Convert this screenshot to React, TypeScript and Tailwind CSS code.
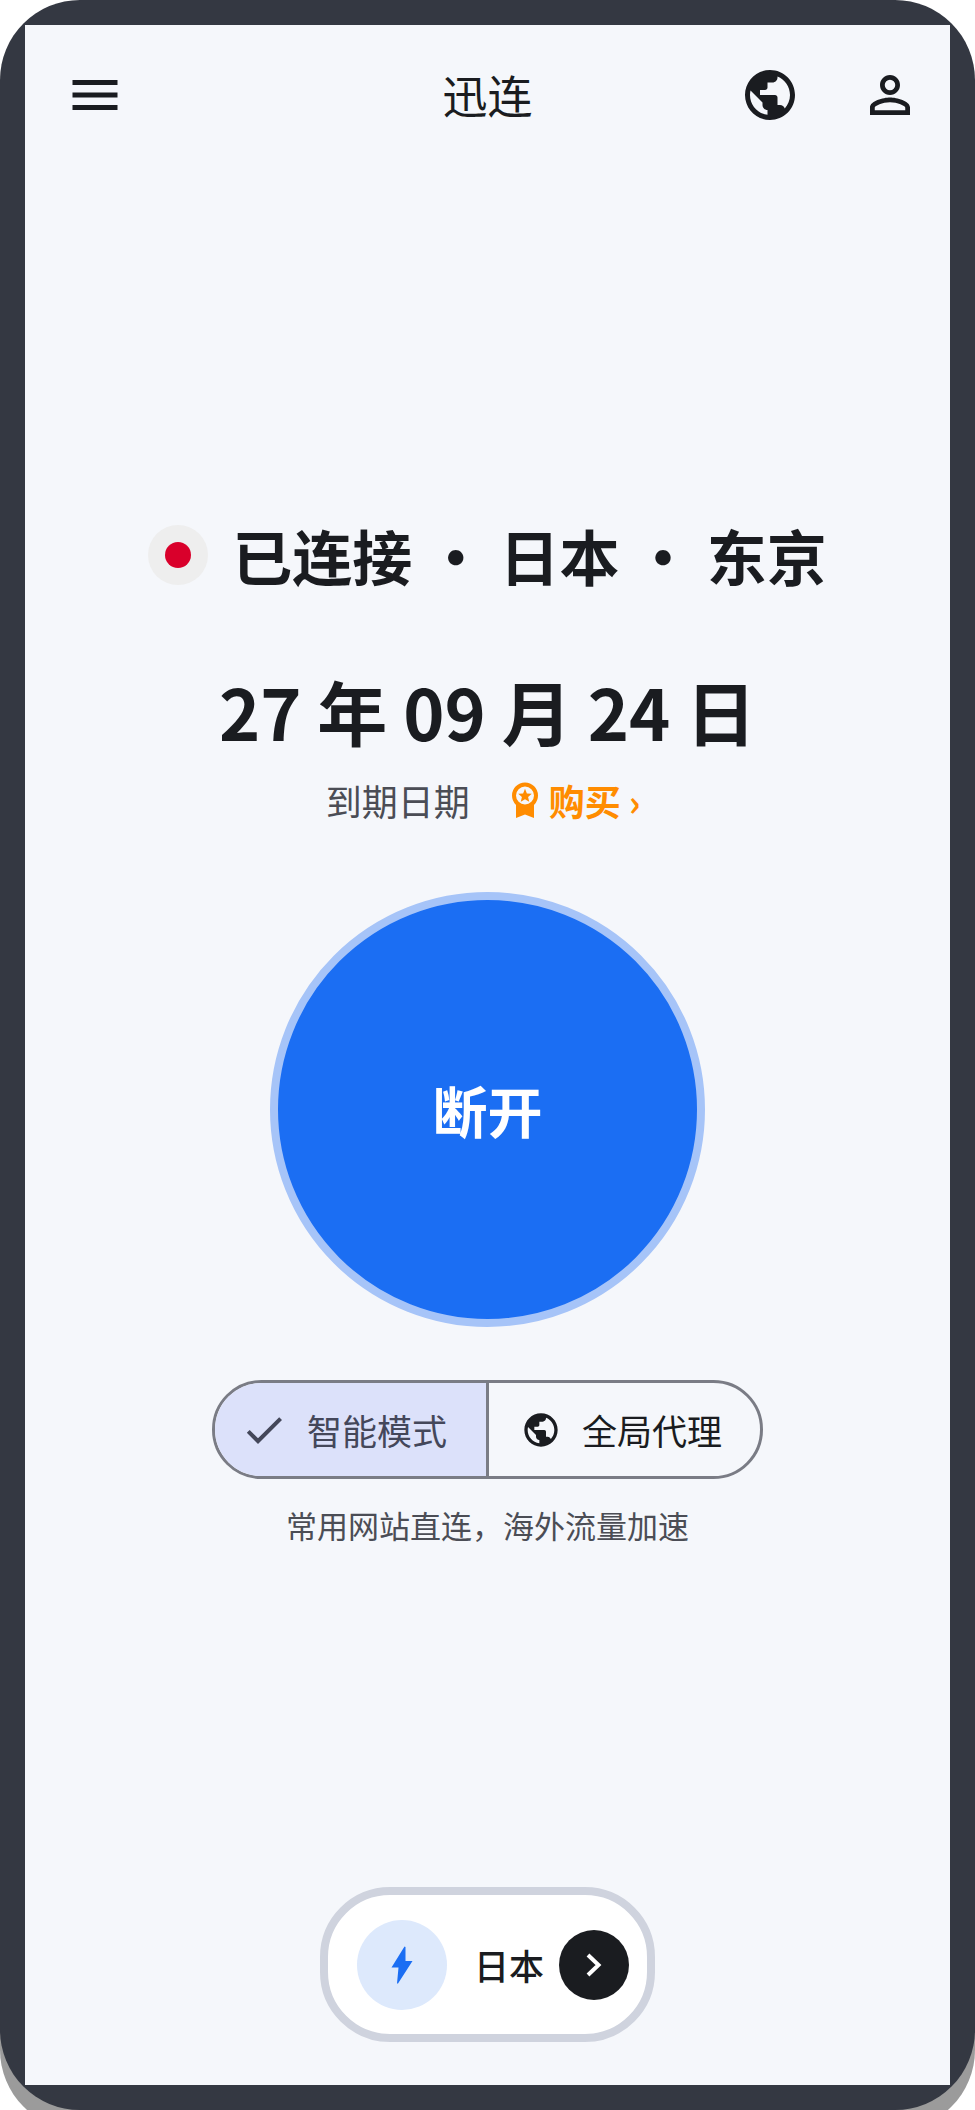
import { MdCheck, MdMenu, MdPersonOutline, MdPublic } from "react-icons/md";

function BuyBadge() {
    return (
        <svg width="28" height="36" viewBox="0 0 28 36" fill="none">
            <path d="M5 18V36L14 32.5L23 36V18Z" fill="#ff8c00" />
            <circle cx="14" cy="13.5" r="11" fill="#f5f7fb" stroke="#ff8c00" strokeWidth="4" />
            <path d="M14 6.8L15.9 11.4L20.8 11.8L17.1 15L18.2 19.8L14 17.2L9.8 19.8L10.9 15L7.2 11.8L12.1 11.4Z" fill="#ff8c00" />
        </svg>
    );
}

function Bolt() {
    return (
        <svg width="22" height="38" viewBox="0 0 22 38" fill="#1b6ef3">
            <path d="M13.5 0.5L14.5 1V15H21.5L7 37.5H6L7.5 21.5H0.5Z" />
        </svg>
    );
}

function Chevron() {
    return (
        <svg width="16" height="24" viewBox="0 0 16 24" fill="none" stroke="white" strokeWidth="4">
            <path d="M2 2L12.5 12L2 22" />
        </svg>
    );
}

export default function App() {
    return (
        <div className="w-[975px] h-[2110px] bg-white overflow-hidden font-['Noto_Sans_CJK_SC','Noto_Sans',sans-serif]">
            <div className="w-full h-full rounded-[80px] p-[25px] bg-[#343842] shadow-[0_20px_0_#9b9b9b]">
                <div className="w-full h-full bg-[#f5f7fb] flex flex-col items-center text-[#1a1c20]">
                    {/* top bar */}
                    <header className="w-full px-[30px] pt-10 grid grid-cols-[1fr_auto_1fr] items-center">
                        <MdMenu size={60} className="ml-[10px]" />
                        <h1 className="text-[45px] leading-[60px] font-normal">迅连</h1>
                        <div className="flex justify-end gap-[60px]">
                            <MdPublic size={60} />
                            <MdPersonOutline size={60} />
                        </div>
                    </header>

                    {/* connection status */}
                    <div className="mt-[400px] flex items-center gap-6">
                        <div className="w-[60px] h-[60px] rounded-full bg-[#eeeeee] flex items-center justify-center">
                            <div className="w-[26px] h-[26px] rounded-full bg-[#d9002b]" />
                        </div>
                        <p className="text-[60px] leading-[60px] font-semibold whitespace-pre">已连接 · 日本 · 东京</p>
                    </div>

                    <p className="mt-[76px] text-[70px] leading-[100px] font-semibold whitespace-pre">27 年 09 月 24 日</p>

                    <div className="mt-[14px] h-[50px] pr-[9px] flex items-center text-[36px] leading-[50px]">
                        <span className="text-[#4b4d55]">到期日期</span>
                        <span className="ml-[41px] flex items-center text-[#ff8c00] font-bold">
                            <BuyBadge />
                            <span className="ml-[10px]">购买</span>
                            <span className="ml-2">›</span>
                        </span>
                    </div>

                    {/* big disconnect button */}
                    <button className="mt-[67px] w-[435px] h-[435px] rounded-full border-[8px] border-[#a6c4f8] bg-[#1b6ef3] text-white text-[55px] font-bold flex items-center justify-center">
                        断开
                    </button>

                    {/* proxy mode toggle */}
                    <div className="mt-[53px] w-[551px] h-[99px] rounded-full border-[3px] border-[#7a7c85] overflow-hidden flex text-[35px]">
                        <div className="w-[274px] bg-[#dce1fa] border-r-[3px] border-[#7a7c85] flex items-center pl-[25px] gap-[19px] text-[#44475a]">
                            <MdCheck size={48} />
                            <span className="pt-px">智能模式</span>
                        </div>
                        <div className="flex-1 flex items-center pl-[32px] gap-[21px]">
                            <MdPublic size={40} />
                            <span className="pt-px">全局代理</span>
                        </div>
                    </div>

                    <p className="mt-[24px] text-[31px] leading-[44px] text-[#4b4d55]">常用网站直连，海外流量加速</p>

                    {/* location picker */}
                    <div className="mt-auto mb-[43px] w-[335px] h-[155px] rounded-[70px] border-[8px] border-[#cfd3de] bg-white flex items-center pl-[29px]">
                        <div className="w-[90px] h-[90px] rounded-full bg-[#dde9fc] flex items-center justify-center">
                            <Bolt />
                        </div>
                        <span className="ml-[27px] text-[35px] leading-[50px] font-medium">日本</span>
                        <div className="ml-[15px] w-[70px] h-[70px] rounded-full bg-[#1a1c20] flex items-center justify-center">
                            <Chevron />
                        </div>
                    </div>
                </div>
            </div>
        </div>
    );
}
